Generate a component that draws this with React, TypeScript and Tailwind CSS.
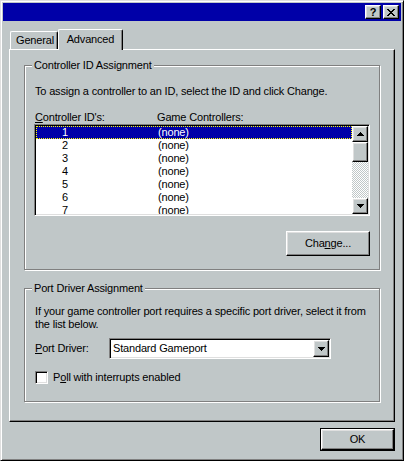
import type { ReactNode } from "react";

const raised =
  "border border-t-white border-l-white border-r-black border-b-black bg-[#c0c7c8] shadow-[inset_-1px_-1px_#808080,inset_1px_1px_#dfdfdf]";
const sunken =
  "border border-t-[#808080] border-l-[#808080] border-r-white border-b-white p-px shadow-[inset_1px_1px_#000,inset_-1px_-1px_#dfdfdf]";

const closeGlyph = [
  "xx....xx",
  ".xx..xx.",
  "..xxxx..",
  "...xx...",
  "..xxxx..",
  ".xx..xx.",
  "xx....xx",
];

function CloseIcon() {
  return (
    <svg width="8" height="7" viewBox="0 0 8 7" shapeRendering="crispEdges">
      {closeGlyph.map((row, y) =>
        row.split("").map((c, x) =>
          c === "x" ? <rect key={`${x}-${y}`} x={x} y={y} width="1" height="1" fill="#000" /> : null
        )
      )}
    </svg>
  );
}

function ArrowUp() {
  return (
    <svg width="7" height="4" viewBox="0 0 7 4" shapeRendering="crispEdges">
      <path d="M3 0h1v1h1v1h1v1h1v1H0V3h1V2h1V1h1z" fill="#000" />
    </svg>
  );
}

function ArrowDown() {
  return (
    <svg width="7" height="4" viewBox="0 0 7 4" shapeRendering="crispEdges">
      <path d="M0 0h7v1H6v1H5v1H4v1H3V3H2V2H1V1H0z" fill="#000" />
    </svg>
  );
}

function TitleButton({ children }: { children: ReactNode }) {
  return (
    <div className={`${raised} flex h-[14px] w-[16px] items-center justify-center`}>
      {children}
    </div>
  );
}

function GroupBox({
  title,
  className,
  children,
}: {
  title: string;
  className: string;
  children: ReactNode;
}) {
  return (
    <div
      className={`relative w-[356px] border border-[#808080] shadow-[1px_1px_#fff,inset_1px_1px_#fff] ${className}`}
    >
      <span className="absolute -top-[7px] left-[7px] bg-[#c0c7c8] px-[2px] leading-[13px]">
        {title}
      </span>
      {children}
    </div>
  );
}

const ids = [1, 2, 3, 4, 5, 6, 7];

export default function App() {
  return (
    <div className="flex h-[461px] w-[404px] select-none flex-col overflow-hidden border border-t-[#dfdfdf] border-l-[#dfdfdf] border-r-black border-b-black bg-[#c0c7c8] p-[2px] font-['Liberation_Sans',Arial,sans-serif] text-[11px] leading-[13px] tracking-[-0.17px] text-black shadow-[inset_1px_1px_#fff,inset_-1px_-1px_#808080]">
      {/* title bar */}
      <div className="flex h-[18px] flex-none items-center justify-end gap-[2px] bg-[#0000a8] pr-[2px]">
        <TitleButton>
          <span className="text-[11px] font-bold leading-none">?</span>
        </TitleButton>
        <TitleButton>
          <CloseIcon />
        </TitleButton>
      </div>

      <div className="flex flex-col px-[6px] pt-[8px]">
        {/* tabs */}
        <div className="relative z-10 -mb-px flex h-[21px] items-end pl-px">
          <div className="mb-px flex h-[18px] w-[48px] items-center justify-center rounded-t-[2px] border-t border-r border-l border-t-white border-r-black border-l-white pl-[2px] shadow-[inset_-1px_0_#808080]">
            General
          </div>
          <div className="flex h-[21px] w-[65px] items-center justify-center rounded-t-[2px] border-t border-r border-l border-t-white border-r-black border-l-white bg-[#c0c7c8] pb-[2px] shadow-[inset_-1px_0_#808080]">
            Advanced
          </div>
        </div>

        {/* tab panel */}
        <div className="flex h-[373px] flex-col border border-t-white border-l-white border-r-black border-b-black pt-[15px] pl-[14px] shadow-[inset_-1px_-1px_#808080]">
          <GroupBox title="Controller ID Assignment" className="h-[205px]">
            <div className="flex flex-col pt-[19px] pl-[10px]">
              <div>To assign a controller to an ID, select the ID and click Change.</div>
              <div className="mt-[13px] flex">
                <span className="w-[122px]">
                  <span className="underline">C</span>ontroller ID's:
                </span>
                <span>Game Controllers:</span>
              </div>
              <div className="-ml-px flex w-[336px] flex-col">
                <div className={`${sunken} flex h-[92px] bg-white`}>
                  <div className="flex-1 overflow-hidden">
                    {ids.map((id) => (
                      <div
                        key={id}
                        className={`flex h-[13px] items-center ${
                          id === 1
                            ? "bg-[#0000a8] text-white outline-1 -outline-offset-1 outline-[#ffff00] outline-dotted"
                            : ""
                        }`}
                      >
                        <span className="w-[58px] text-center">{id}</span>
                        <span className="ml-[64px]">(none)</span>
                      </div>
                    ))}
                  </div>
                  <div className="flex w-[16px] flex-col">
                    <div className={`${raised} flex h-[16px] flex-none items-center justify-center`}>
                      <ArrowUp />
                    </div>
                    <div className={`${raised} h-[20px] flex-none`} />
                    <div className="flex-1 bg-[repeating-conic-gradient(#fff_0%_25%,#c0c7c8_0%_50%)] bg-[length:2px_2px]" />
                    <div className={`${raised} flex h-[16px] flex-none items-center justify-center`}>
                      <ArrowDown />
                    </div>
                  </div>
                </div>
                <button
                  className={`${raised} mt-[15px] flex h-[25px] w-[84px] items-center justify-center self-end`}
                >
                  Cha<span className="underline">n</span>ge...
                </button>
              </div>
            </div>
          </GroupBox>

          <GroupBox title="Port Driver Assignment" className="mt-[18px] h-[114px]">
            <div className="flex flex-col pt-[16px] pl-[10px]">
              <div>
                If your game controller port requires a specific port driver, select it from
                <br />
                the list below.
              </div>
              <div className="mt-[7px] flex h-[21px] items-center">
                <span className="w-[74px]">
                  <span className="underline">P</span>ort Driver:
                </span>
                <div className={`${sunken} flex h-[21px] w-[222px] bg-white`}>
                  <div className="flex flex-1 items-center pl-[2px]">Standard Gameport</div>
                  <div className={`${raised} flex w-[16px] items-center justify-center`}>
                    <ArrowDown />
                  </div>
                </div>
              </div>
              <div className="mt-[12px] flex items-center">
                <div className={`${sunken} h-[13px] w-[13px] bg-white`} />
                <span className="ml-[5px]">
                  P<span className="underline">o</span>ll with interrupts enabled
                </span>
              </div>
            </div>
          </GroupBox>
        </div>

        {/* footer */}
        <div className="mt-[6px] flex justify-end">
          <div className="border border-black">
            <button className={`${raised} flex h-[21px] w-[73px] items-center justify-center`}>
              OK
            </button>
          </div>
        </div>
      </div>
    </div>
  );
}
